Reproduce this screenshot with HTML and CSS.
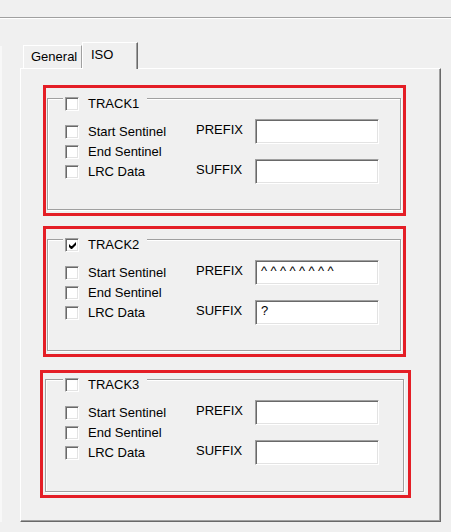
FILE: index.html
```html
<!DOCTYPE html>
<html>
<head>
<meta charset="utf-8">
<link rel="stylesheet" href="styles.css">
</head>
<body>
<div class="topbar"></div>
<div class="edge"></div>
<div class="dialog">
  <div class="tabs">
    <div class="tab">General</div>
    <div class="tab selected">ISO</div>
  </div>
  <div class="panel">
    <div class="mark m1">
      <div class="group g1">
        <div class="gtitle"><span class="cb"></span><span>TRACK1</span></div>
        <div class="gbody">
          <div class="checks">
            <div class="crow"><span class="cb"></span><span>Start Sentinel</span></div>
            <div class="crow"><span class="cb"></span><span>End Sentinel</span></div>
            <div class="crow"><span class="cb"></span><span>LRC Data</span></div>
          </div>
          <div class="fields">
            <span class="flabel">PREFIX</span><div class="input"></div>
            <span class="flabel">SUFFIX</span><div class="input"></div>
          </div>
        </div>
      </div>
    </div>
    <div class="mark m2">
      <div class="group g2">
        <div class="gtitle"><span class="cb checked"><svg viewBox="0 0 7 7" width="7" height="7"><path d="M0 2v3l2 2h1l4-4v-3l-4 4h-1z" fill="#000"/></svg></span><span>TRACK2</span></div>
        <div class="gbody">
          <div class="checks">
            <div class="crow"><span class="cb"></span><span>Start Sentinel</span></div>
            <div class="crow"><span class="cb"></span><span>End Sentinel</span></div>
            <div class="crow"><span class="cb"></span><span>LRC Data</span></div>
          </div>
          <div class="fields">
            <span class="flabel">PREFIX</span><div class="input wide">^^^^^^^^</div>
            <span class="flabel">SUFFIX</span><div class="input">?</div>
          </div>
        </div>
      </div>
    </div>
    <div class="mark m3">
      <div class="group g3">
        <div class="gtitle"><span class="cb"></span><span>TRACK3</span></div>
        <div class="gbody">
          <div class="checks">
            <div class="crow"><span class="cb"></span><span>Start Sentinel</span></div>
            <div class="crow"><span class="cb"></span><span>End Sentinel</span></div>
            <div class="crow"><span class="cb"></span><span>LRC Data</span></div>
          </div>
          <div class="fields">
            <span class="flabel">PREFIX</span><div class="input"></div>
            <span class="flabel">SUFFIX</span><div class="input"></div>
          </div>
        </div>
      </div>
    </div>
  </div>
</div>
</body>
</html>
```
FILE: styles.css
```css
* { box-sizing: border-box; }
html, body {
  margin: 0;
  padding: 0;
  background: #f0f0f0;
  width: 451px;
  height: 532px;
  overflow: hidden;
}
body {
  font-family: "Liberation Sans", Arial, sans-serif;
  font-size: 13px;
  color: #000;
  position: relative;
}
.topbar {
  height: 19px;
  border-bottom: 1px solid #ffffff;
  box-shadow: inset 0 -1px 0 #a0a0a0;
}
.edge {
  position: absolute;
  left: 0;
  top: 46px;
  width: 2px;
  height: 476px;
  background: #f8f8f8;
}
.dialog {
  padding: 23px 0 0 20px;
}
.tabs {
  display: flex;
  align-items: flex-end;
  height: 26px;
  padding-left: 3px;
  position: relative;
  z-index: 1;
}
.tab {
  height: 23px;
  width: 59px;
  border-top: 1px solid #fff;
  border-left: 1px solid #fff;
  border-right: 1px solid #a0a0a0;
  padding: 4px 0 0 7px;
  line-height: 14px;
}
.tab.selected {
  height: 27px;
  width: 56px;
  margin-bottom: -1px;
  background: #f0f0f0;
  border-right: 1px solid #696969;
  box-shadow: inset -1px 0 0 #a0a0a0;
  padding: 5px 0 0 8px;
}
.panel {
  width: 421px;
  height: 454px;
  border-top: 1px solid #fff;
  border-left: 1px solid #fff;
  border-right: 1px solid #696969;
  border-bottom: 1px solid #696969;
  box-shadow: inset -1px -1px 0 #a0a0a0;
  padding: 16px 0 0 22px;
}
.mark {
  border: 3px solid #e41e26;
}
.m1, .m2 {
  width: 363px;
  height: 131px;
  padding: 10px 1px 0 1px;
}
.m2 { margin-top: 10px; }
.m3 {
  width: 371px;
  height: 128px;
  margin-top: 13px;
  margin-left: -3px;
  padding: 6px 3px 0 2px;
}
.group {
  border: 1px solid #a0a0a0;
  box-shadow: inset 1px 1px 0 #fff, 1px 1px 0 #fff;
  height: 112px;
  padding-left: 17px;
  width: 354px;
}
.g3 { width: 359px; padding-left: 19px; height: 113px; }
.gtitle {
  display: flex;
  width: fit-content;
  align-items: center;
  background: #f0f0f0;
  margin-top: -2px;
  margin-left: -2px;
  height: 14px;
  padding: 0 8px 0 2px;
  gap: 9px;
  line-height: 14px;
}
.cb {
  display: inline-flex;
  align-items: center;
  justify-content: center;
  width: 14px;
  height: 14px;
  background: #fff;
  border-top: 1px solid #a0a0a0;
  border-left: 1px solid #a0a0a0;
  border-right: 1px solid #fff;
  border-bottom: 1px solid #fff;
  box-shadow: inset 1px 1px 0 #696969, inset -1px -1px 0 #e3e3e3;
  flex: none;
}
.gbody {
  display: flex;
  margin-top: 8px;
}
.checks {
  display: flex;
  flex-direction: column;
  width: 131px;
  padding-top: 3px;
}
.crow {
  display: flex;
  align-items: center;
  height: 20px;
  gap: 9px;
  line-height: 14px;
}
.fields {
  display: grid;
  grid-template-columns: 59px 124px;
  grid-auto-rows: 25px;
  row-gap: 15px;
  align-items: start;
}
.flabel {
  padding-top: 4px;
  line-height: 14px;
}
.input {
  height: 25px;
  background: #fff;
  border-top: 1px solid #a0a0a0;
  border-left: 1px solid #a0a0a0;
  border-right: 1px solid #fff;
  border-bottom: 1px solid #fff;
  box-shadow: inset 1px 1px 0 #696969, inset -1px -1px 0 #e3e3e3;
  padding: 3px 0 0 5px;
  line-height: 14px;
}
.input.wide {
  letter-spacing: 3.4px;
}
```
